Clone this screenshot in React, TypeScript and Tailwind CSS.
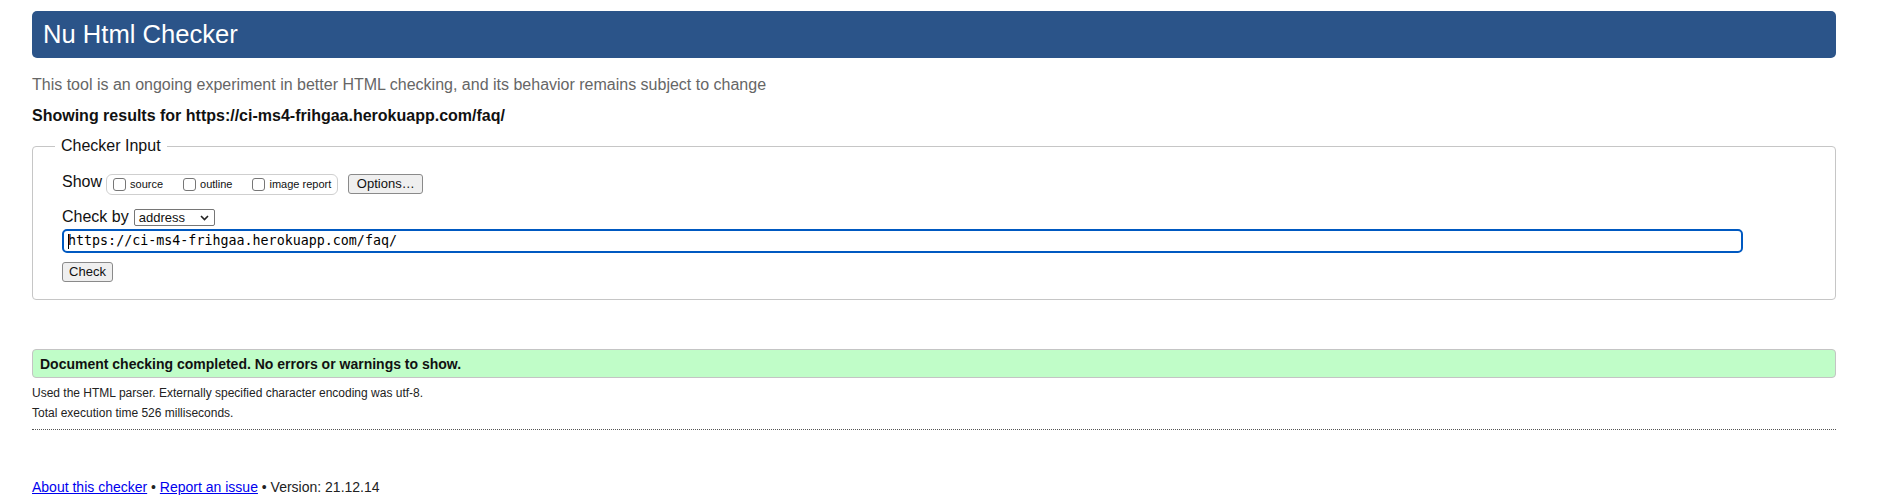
import React from 'react'

const url = 'https://ci-ms4-frihgaa.herokuapp.com/faq/'

function CheckOption({ label }: { label: string }) {
  return (
    <label className="flex items-center gap-[4px]">
      <input
        type="checkbox"
        className="appearance-none m-0 w-[13px] h-[13px] border border-[#767676] rounded-[3px] bg-white"
      />
      <span className="text-[11px] leading-[13px]">{label}</span>
    </label>
  )
}

export default function App() {
  return (
    <div className="min-h-screen bg-white pl-[32px] pr-[47px] pt-[11px] text-[#222] font-['Liberation_Sans',Arial,sans-serif]">
      {/* header */}
      <h1 className="h-[47px] flex items-center pl-[11px] rounded-[5px] bg-[#2b5489] text-white text-[25.6px] font-normal">
        Nu Html Checker
      </h1>

      <p className="mt-[18px] text-[16px] leading-[18px] text-[#666]">
        This tool is an ongoing experiment in better HTML checking, and its behavior remains subject to change
      </p>
      <p className="mt-[13px] text-[16px] leading-[18px] font-bold text-[#111]">
        Showing results for {url}
      </p>

      {/* checker input */}
      <fieldset className="mt-[12px] border border-[#c6c6c6] rounded-[4px] px-[22px] pt-[18px] pb-[17px]">
        <legend className="px-[6px] text-[16px] leading-[18px] text-[#111]">Checker Input</legend>
        <div className="pl-[7px]">
          <div className="flex items-center">
            <span className="text-[16px] leading-[18px] mb-[4px] text-[#111]">Show</span>
            <div className="ml-[4px] h-[21px] flex items-center gap-[20px] border border-[#cfcfcf] rounded-[6px] px-[6px] text-[#111]">
              <CheckOption label="source" />
              <CheckOption label="outline" />
              <CheckOption label="image report" />
            </div>
            <button className="ml-[10px] w-[75px] h-[20px] flex items-center justify-center border border-[#8a8a8a] rounded-[3px] bg-[#efefef] text-[13px] text-[#111]">
              Options…
            </button>
          </div>

          <div className="mt-[13px] flex items-baseline">
            <span className="text-[16px] leading-[18px] text-[#111]">Check by</span>
            <span className="ml-[5px] inline-flex items-center justify-between w-[81px] h-[17px] pl-[4px] pr-[5px] border border-[#767676] rounded-[2px] bg-white text-[13px] leading-[15px] text-[#111]">
              address
              <svg width="9" height="6" viewBox="0 0 9 6" fill="none">
                <path d="M1 1l3.5 3.5L8 1" stroke="#222" strokeWidth="1.6" />
              </svg>
            </span>
          </div>

          <div className="mt-[3px] w-[1681px] h-[24px] flex items-center pl-[4px] border-2 border-[#0059c1] rounded-[5px] bg-white">
            <span className="w-px h-[15px] bg-black" />
            <span className="-ml-px font-['DejaVu_Sans_Mono',monospace] text-[13.33px] leading-[16px] text-black">
              {url}
            </span>
          </div>

          <button className="mt-[9px] w-[51px] h-[20px] flex items-center justify-center border border-[#8a8a8a] rounded-[3px] bg-[#efefef] text-[13px] text-[#111]">
            Check
          </button>
        </div>
      </fieldset>

      {/* results */}
      <div className="mt-[49px] h-[29px] flex items-center px-[7px] border border-[#c4c4c4] rounded-[4px] bg-[#c0fdc8]">
        <strong className="text-[14px] leading-[16px] text-[#111]">
          Document checking completed. No errors or warnings to show.
        </strong>
      </div>
      <p className="mt-[8px] text-[12px] leading-[14px] text-[#222]">
        Used the HTML parser. Externally specified character encoding was utf-8.
      </p>
      <p className="mt-[6px] text-[12px] leading-[14px] text-[#222]">
        Total execution time 526 milliseconds.
      </p>
      <hr className="mt-[9px] border-0 border-t border-dotted border-[#555]" />

      {/* footer */}
      <p className="mt-[49px] text-[14px] leading-[16px] text-[#222]">
        <a href="#" className="text-[#0000ee] underline">About this checker</a>
        {' • '}
        <a href="#" className="text-[#0000ee] underline">Report an issue</a>
        {' • Version: 21.12.14'}
      </p>
    </div>
  )
}
